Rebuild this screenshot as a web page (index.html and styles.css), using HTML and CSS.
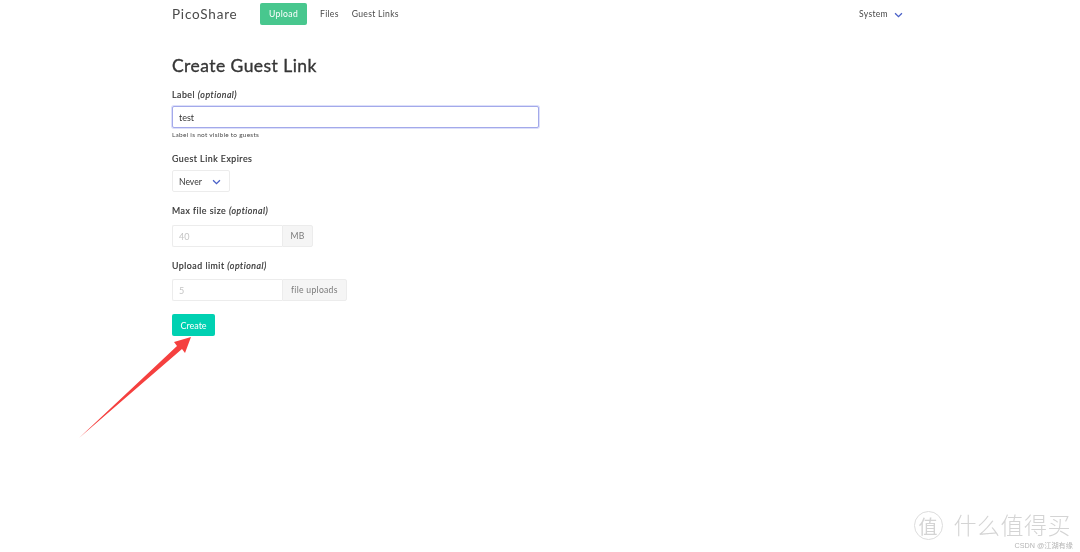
FILE: index.html
```html
<!DOCTYPE html>
<html lang="en">
<head>
<meta charset="utf-8">
<title>PicoShare</title>
<link rel="stylesheet" href="styles.css">
</head>
<body>
<div class="page">
  <nav class="navbar">
    <span class="brand">PicoShare</span>
    <a class="btn-upload">Upload</a>
    <a class="nav-link nav-files">Files</a>
    <a class="nav-link">Guest Links</a>
    <span class="nav-end">
      <a class="nav-link">System</a>
      <svg class="chev chev-nav" viewBox="0 0 10 7"><path d="M1 1.5 L5 5.5 L9 1.5"/></svg>
    </span>
  </nav>
  <main class="content">
    <h1 class="title">Create Guest Link</h1>
    <form class="form">
      <div class="field field-label">
        <div class="label">Label <em>(optional)</em></div>
        <div class="input input-focus">test</div>
        <div class="help">Label is not visible to guests</div>
      </div>
      <div class="field field-expires">
        <div class="label">Guest Link Expires</div>
        <div class="select"><span>Never</span><svg class="chev" viewBox="0 0 10 7"><path d="M1 1.5 L5 5.5 L9 1.5"/></svg></div>
      </div>
      <div class="field field-size">
        <div class="label">Max file size <em>(optional)</em></div>
        <div class="addons"><div class="input input-num">40</div><div class="addon">MB</div></div>
      </div>
      <div class="field field-limit">
        <div class="label">Upload limit <em>(optional)</em></div>
        <div class="addons addons-tight"><div class="input input-num">5</div><div class="addon">file uploads</div></div>
      </div>
      <div class="btn-create">Create</div>
    </form>
  </main>
  <svg class="arrow" viewBox="0 0 1080 552"><polygon points="79,438 177,346 174,342 191,337 185,353 182,349"/></svg>
  <div class="watermark">
    <div class="wm-main"><span class="wm-circle">值</span><span class="wm-text">什么值得买</span></div>
    <div class="wm-sub">CSDN @江湖有缘</div>
  </div>
</div>
</body>
</html>
```
FILE: styles.css
```css
html, body { margin: 0; padding: 0; background: #fff; }
.page {
  position: relative;
  width: 1080px;
  height: 552px;
  overflow: hidden;
  font-family: "Lato", "Noto Sans", sans-serif;
  color: #4a4a4a;
  font-size: 9px;
  filter: blur(0.35px);
}
.navbar {
  display: flex;
  align-items: center;
  height: 27px;
  padding-left: 172px;
  width: 732px;
}
.brand { font-size: 13.5px; letter-spacing: 0.8px; color: #4a4a4a; width: 88px; }
.btn-upload {
  display: flex; align-items: center; justify-content: center;
  width: 47px; height: 22px;
  background: #48c78e; color: #fff; border-radius: 2px;
  font-size: 8.6px; letter-spacing: 0.35px;
}
.nav-link { font-size: 8.6px; letter-spacing: 0.3px; color: #4a4a4a; }
.nav-files { margin-left: 13px; margin-right: 13px; }
.nav-end { margin-left: auto; display: flex; align-items: center; gap: 6px; }
.chev { width: 9px; height: 6px; fill: none; stroke: #485fc7; stroke-width: 1.5; }
.chev-nav { margin-right: 1px; margin-top: 2px; }
.content { padding-left: 172px; }
.title {
  margin: 29px 0 0;
  font-size: 17.5px;
  line-height: 20px;
  font-weight: 400;
  letter-spacing: 0.45px;
  color: #363636;
  -webkit-text-stroke: 0.35px #363636;
}
.form { display: flex; flex-direction: column; }
.label {
  font-size: 8.8px;
  line-height: 12px;
  font-weight: 400;
  letter-spacing: 0.5px;
  color: #363636;
  -webkit-text-stroke: 0.2px #363636;
}
.label em { font-style: italic; }
.field-label { margin-top: 13px; }
.input {
  box-sizing: border-box;
  display: flex; align-items: center;
  height: 22px;
  padding-left: 6px;
  border: 1px solid #e4e4e4;
  border-radius: 2px;
  font-size: 9px;
  color: #363636;
  background: #fff;
}
.input-focus {
  width: 367px;
  margin-top: 5px;
  border-color: #a3a9ea;
  box-shadow: 0 0 0 1px #dcdffa;
}
.help { margin-top: 2px; font-size: 6.5px; line-height: 9px; letter-spacing: 0.25px; color: #4a4a4a; }
.field-expires { margin-top: 14px; }
.select {
  box-sizing: border-box;
  display: flex; align-items: center;
  width: 58px; height: 22px;
  margin-top: 5px;
  padding: 1px 8px 0 6px;
  justify-content: space-between;
  border: 1px solid #ececec;
  border-radius: 2px;
  font-size: 8.6px;
  color: #363636;
}
.field-size { margin-top: 13px; }
.field-limit { margin-top: 13px; }
.addons { display: flex; margin-top: 8px; }
.addons-tight { margin-top: 7px; }
.input-num { width: 110px; color: #c4c4c4; border-color: #ececec; border-radius: 2px 0 0 2px; border-right: 0; }
.addon {
  box-sizing: border-box;
  display: flex; align-items: center;
  height: 22px;
  padding: 0 8px;
  background: #f5f5f5;
  border: 1px solid #ececec;
  border-radius: 0 2px 2px 0;
  font-size: 8.6px;
  letter-spacing: 0.3px;
  color: #7a7a7a;
}
.field-size .addon { width: 31px; justify-content: center; padding: 0; }
.btn-create {
  display: flex; align-items: center; justify-content: center;
  width: 43px; height: 22px;
  margin-top: 13px;
  background: #00d1b2;
  color: #fff;
  border-radius: 2px;
  font-size: 9px;
}
.arrow { position: absolute; left: 0; top: 0; width: 1080px; height: 552px; fill: #f5403f; pointer-events: none; }
.watermark {
  position: absolute; right: 7px; bottom: 2px;
  display: flex; flex-direction: column; align-items: flex-end;
  font-family: "Noto Sans CJK SC", sans-serif;
  color: #d4d4d4;
}
.wm-main { display: flex; align-items: flex-start; gap: 11px; margin-right: 2px; height: 30px; }
.wm-circle {
  box-sizing: border-box;
  display: flex; align-items: center; justify-content: center;
  width: 29px; height: 29px;
  border: 1px solid #dcdcdc; border-radius: 50%;
  font-size: 19px; line-height: 1;
}
.wm-text { font-size: 23px; line-height: 26px; font-weight: 300; letter-spacing: 0.5px; }
.wm-sub { font-size: 7.2px; line-height: 9px; color: #b5b5b5; font-family: "Liberation Sans", "Noto Sans CJK SC", sans-serif; }
```
